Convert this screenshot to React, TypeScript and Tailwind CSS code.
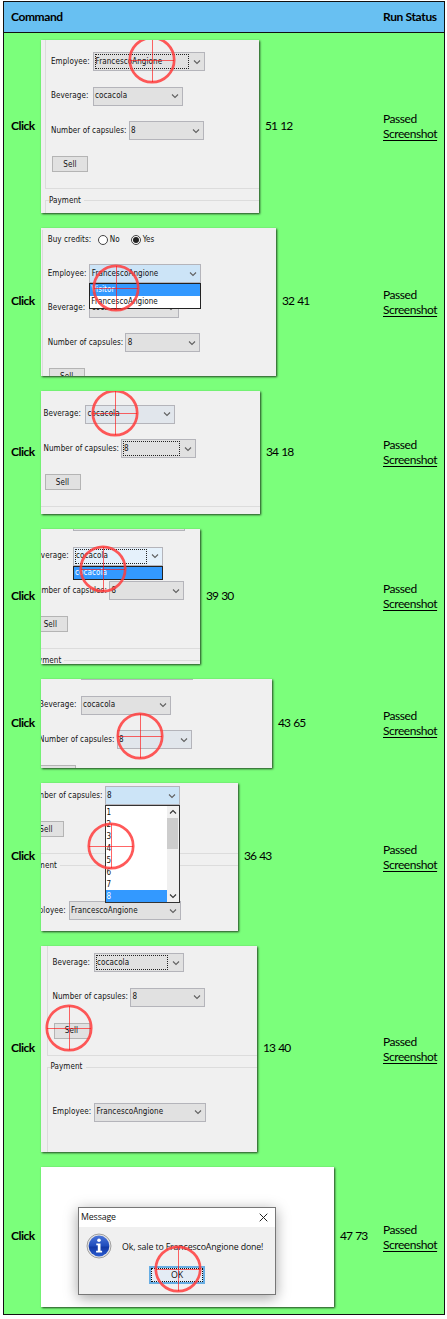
import type { ReactNode } from "react";

const UI = "font-['DejaVu_Sans_Condensed','DejaVu_Sans',sans-serif]";

function Chevron({ up = false, className = "stroke-[#606060]" }: { up?: boolean; className?: string }) {
  return (
    <svg viewBox="0 0 8 6" className={`h-[6px] w-[8px] shrink-0 fill-none ${className}`}>
      <path d={up ? "M1 4.5 L4 1.5 L7 4.5" : "M1 1.5 L4 4.5 L7 1.5"} strokeWidth="1.1" />
    </svg>
  );
}

function Target({ className }: { className: string }) {
  return (
    <svg viewBox="-24 -24 48 48" className={`absolute z-20 size-[48px] fill-none ${className}`}>
      <circle r="22.2" stroke="#ff3c3c" strokeOpacity="0.85" strokeWidth="2.7" />
      <path d="M-22 .5H22M.5 -22V22" stroke="#ff1414" strokeOpacity="0.65" strokeWidth="1" />
    </svg>
  );
}

type ComboState = { focus?: boolean; bg?: string; list?: ReactNode };

function Combo({ width, value, focus, bg = "bg-[#e1e1e1]", list }: ComboState & { width: string; value: string }) {
  return (
    <div className={`relative flex h-[19px] shrink-0 items-center justify-between border border-[#b4b4ba] pr-[3px] pl-[1.5px] ${bg} ${width}`}>
      <span className={`flex h-[15px] flex-1 items-center ${focus ? "mr-[4px] -ml-[0.5px] border border-dotted border-[#222]" : ""}`}>{value}</span>
      <Chevron />
      {list}
    </div>
  );
}

function Field({ label, wide, children, className }: { label: string; wide?: boolean; children: ReactNode; className: string }) {
  return (
    <div className={`flex items-center ${className}`}>
      <span className={`shrink-0 ${wide ? "w-[77.6px]" : "w-[41.6px]"}`}>{label}</span>
      {children}
    </div>
  );
}

function Radio({ checked, label }: { checked?: boolean; label: string }) {
  return (
    <span className="flex items-center gap-[2px]">
      <span className="flex size-[10px] items-center justify-center rounded-full border border-[#444] bg-white">
        {checked && <span className="size-[6px] rounded-full bg-[#222]" />}
      </span>
      {label}
    </span>
  );
}

function Form({ place, employee, beverage, capsules }: { place: string; employee?: ComboState; beverage?: ComboState; capsules?: ComboState }) {
  return (
    <div className={`flex w-[330px] flex-col ${place}`}>
      <div className="flex h-[171px] flex-col border-b border-l border-[#dcdcdc] pl-[5px]">
        <div className="flex h-[19px] shrink-0 items-center">
          <span className="w-[50px]">Buy credits:</span>
          <span className="w-[33px]"><Radio label="No" /></span>
          <Radio checked label="Yes" />
        </div>
        <Field label="Employee:" className="mt-[15px]">
          <Combo width="w-[112px]" value="FrancescoAngione" {...employee} />
        </Field>
        <Field label="Beverage:" className="mt-[15.5px]">
          <Combo width="w-[90px]" value="cocacola" {...beverage} />
        </Field>
        <Field label="Number of capsules:" wide className="mt-[15.5px]">
          <Combo width="w-[75px]" value="8" {...capsules} />
        </Field>
        <div className="mt-[16px] ml-px flex h-[16px] w-[36px] shrink-0 items-center justify-center border border-[#b4b4b4] bg-[#e1e1e1] pt-px">Sell</div>
      </div>
      <div className="mt-[11px] flex h-[110px] flex-col border-t border-l border-[#dcdcdc] pl-[3px]">
        <span className="-mt-[6px] flex h-[11px] w-[35px] items-center bg-[#f0f0f0]">Payment</span>
        <Field label="Employee:" className="mt-[30px] pl-[2px]">
          <Combo width="w-[112px]" value="FrancescoAngione" />
        </Field>
      </div>
    </div>
  );
}

function Menu({ items, selected }: { items: string[]; selected: string }) {
  return (
    <div className="absolute top-[18px] -right-px -left-px z-10 flex flex-col border border-[#222] bg-white">
      {items.map((item) => (
        <span key={item} className={`flex h-[12px] items-center pl-px ${item === selected ? "bg-[#3399ff] text-white" : ""}`}>{item}</span>
      ))}
    </div>
  );
}

function NumberMenu() {
  return (
    <div className="absolute top-[18px] -right-px -left-px z-10 flex border border-[#333] bg-white">
      <div className="flex flex-1 flex-col">
        {["1", "2", "3", "4", "5", "6", "7", "8"].map((item) => (
          <span key={item} className={`flex h-[12px] items-center pt-px pl-px ${item === "8" ? "bg-[#3399ff] text-white" : ""}`}>{item}</span>
        ))}
      </div>
      <div className="flex w-[12px] flex-col items-center bg-[#f0f0f0]">
        <span className="flex h-[12px] items-center"><Chevron up className="stroke-[#333]" /></span>
        <span className="h-[31px] w-[11px] bg-[#cdcdcd]" />
        <span className="mt-auto flex h-[12px] items-center"><Chevron className="stroke-[#333]" /></span>
      </div>
    </div>
  );
}

function Dialog() {
  return (
    <div className="mt-[40px] ml-[37px] flex h-[88px] w-[198px] shrink-0 flex-col border border-[#777] bg-[#f0f0f0] font-['Open_Sans',sans-serif] text-[8.8px] tracking-[-0.13px] shadow-[0_3px_13px_rgba(0,0,0,0.36)]">
      <div className="flex h-[19px] shrink-0 items-center justify-between bg-white pr-[7px] pl-[2px]">
        <span>Message</span>
        <svg viewBox="0 0 9 9" className="size-[9px] stroke-[#222]"><path d="M.7 .7 8.3 8.3M8.3 .7.7 8.3" strokeWidth="1" /></svg>
      </div>
      <div className="mt-[6px] flex items-center pl-[7px]">
        <svg viewBox="0 0 26 26" className="size-[26px] shrink-0">
          <defs>
            <linearGradient id="info" x1="0" y1="0" x2="0" y2="1">
              <stop offset="0" stopColor="#4a74d8" />
              <stop offset=".5" stopColor="#1f4cbc" />
              <stop offset=".55" stopColor="#1238a4" />
              <stop offset="1" stopColor="#2a5bd0" />
            </linearGradient>
          </defs>
          <circle cx="13" cy="13" r="12" fill="#e4e4e4" stroke="#8d8d8d" strokeWidth=".8" />
          <circle cx="13" cy="13" r="10.4" fill="url(#info)" />
          <circle cx="13" cy="7.2" r="1.8" fill="#fff" />
          <path d="M10.3 10.5h4.2v7.3h1.6v1.7h-6v-1.7h1.7v-5.5h-1.5z" fill="#fff" />
        </svg>
        <span className="mt-[2px] ml-[10px] whitespace-nowrap">Ok, sale to FrancescoAngione done!</span>
      </div>
      <div className="mt-[7px] ml-[70px] flex h-[18px] w-[56px] items-center justify-center border-2 border-[#68aee4] bg-[#e4ecf5] p-0">
        <span className="flex h-full w-full items-center justify-center border border-dotted border-[#111]">OK</span>
      </div>
    </div>
  );
}

function Step({ size, note, children }: { size: string; note: string; children: ReactNode }) {
  return (
    <div className="flex items-center pt-[7px] pb-[8px] pl-[7px]">
      <span className="mb-[3px] w-[30px] shrink-0 font-bold tracking-[-0.5px]">Click</span>
      <div className={`relative shrink-0 overflow-hidden leading-none whitespace-nowrap text-[#111] shadow-[1px_1px_2px_rgba(0,0,0,0.75)] ${UI} text-[8px] tracking-[0.07px] ${size}`}>{children}</div>
      <span className="mb-[3px] ml-[6px] whitespace-nowrap tracking-[-0.95px] [word-spacing:1px]">{note}</span>
      <div className="mb-px ml-auto flex w-[61px] shrink-0 flex-col leading-[15px] tracking-[-0.45px]">
        <span>Passed</span>
        <a className="w-fit underline underline-offset-2">Screenshot</a>
      </div>
    </div>
  );
}

export default function App() {
  return (
    <div className="min-h-[1319px] bg-white pt-px pl-[3px] font-['Lato',sans-serif] text-[12px] leading-[15px] text-black">
      <div className="flex h-[1314px] w-[442px] flex-col overflow-hidden border border-[#111] bg-[#7bff7b]">
        <div className="flex h-[31px] shrink-0 items-center border-b border-[#111] bg-[#68c0f2] pb-px pl-[7px] font-bold">
          <span className="tracking-[-0.4px]">Command</span>
          <span className="ml-auto w-[61px] whitespace-nowrap tracking-[-0.35px]">Run Status</span>
        </div>
        <Step size="h-[173px] w-[218px] bg-[#f0f0f0]" note="51 12">
          <Form place="mt-[-22px] ml-[4px]" employee={{ focus: true }} />
          <Target className="top-[-4px] left-[87px]" />
        </Step>
        <Step size="h-[148px] w-[235px] bg-[#f0f0f0]" note="32 41">
          <Form place="mt-[2px] ml-[0.7px]" employee={{ bg: "bg-[#cce4f7]", list: <Menu items={["Visitor", "FrancescoAngione"]} selected="Visitor" /> }} />
          <Target className="top-[36px] left-[51px]" />
        </Step>
        <Step size="h-[123px] w-[219px] bg-[#f0f0f0]" note="34 18">
          <Form place="mt-[-55px] ml-[-3.5px]" beverage={{ bg: "bg-[#e1e6ec]" }} capsules={{ focus: true }} />
          <Target className="top-[-2px] left-[50px]" />
        </Step>
        <Step size="h-[135px] w-[159px] bg-[#f0f0f0]" note="39 30">
          <Form place="mt-[-51px] ml-[-15.7px]" beverage={{ focus: true, bg: "bg-[#e5f1fb]", list: <Menu items={["cocacola"]} selected="cocacola" /> }} />
          <Target className="top-[16px] left-[38px]" />
        </Step>
        <Step size="h-[89px] w-[231px] bg-[#f0f0f0]" note="43 65">
          <Form place="mt-[-52px] ml-[-8px]" capsules={{ bg: "bg-[#e1e6ec]" }} />
          <Target className="top-[33px] left-[75px]" />
        </Step>
        <Step size="h-[148px] w-[197px] bg-[#f0f0f0]" note="36 43">
          <Form place="mt-[-100px] ml-[-20px]" capsules={{ bg: "bg-[#cce4f7]", list: <NumberMenu /> }} />
          <Target className="top-[39px] left-[46px]" />
        </Step>
        <Step size="h-[206px] w-[216px] bg-[#f0f0f0]" note="13 40">
          <Form place="mt-[-61.5px] ml-[5.5px]" beverage={{ focus: true }} />
          <Target className="top-[58px] left-[4px]" />
        </Step>
        <Step size="h-[140px] w-[293px] bg-white flex flex-col" note="47 73">
          <Dialog />
          <Target className="top-[78px] left-[113px]" />
        </Step>
      </div>
    </div>
  );
}
